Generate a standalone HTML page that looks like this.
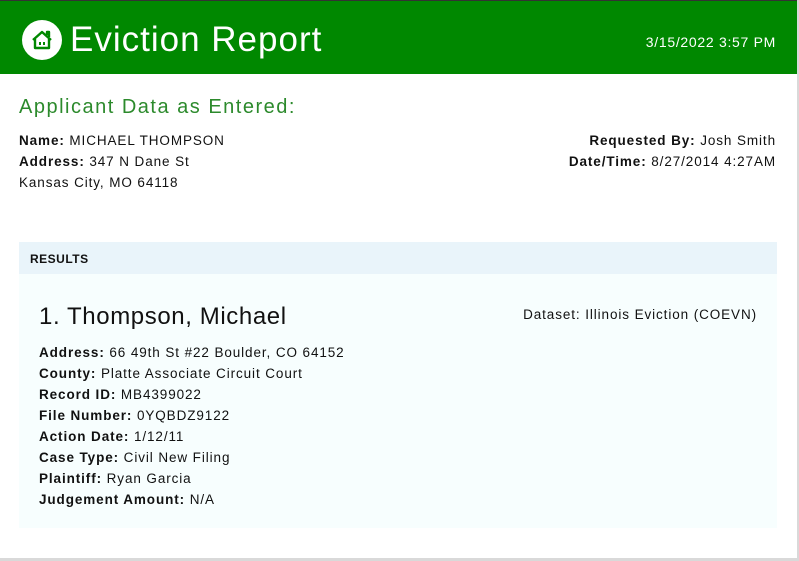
<!DOCTYPE html>
<html><head><meta charset="utf-8"><style>
*{margin:0;padding:0;box-sizing:border-box}
body{width:799px;height:561px;background:#d9d9d9;font-family:"Liberation Sans",sans-serif;color:#111;overflow:hidden;position:relative}
.page{position:absolute;left:0;top:0;width:797px;height:558px;background:#fff;border-top:1px solid #333}
.hdr{position:absolute;left:0;top:0;width:797px;height:73px;background:#008800;color:#fff}
.icon{position:absolute;left:22px;top:19px;width:40px;height:40px;border-radius:50%;background:#fff}
.title{position:absolute;left:70px;top:19px;font-size:35px;letter-spacing:1px}
.dt{position:absolute;right:21px;top:33px;font-size:14px;letter-spacing:0.7px}
h2{position:absolute;left:19px;top:95px;font-weight:normal;color:#2c8a2c;font-size:20px;letter-spacing:1.5px}
.l,.r,.f,.ds{font-size:13.5px;letter-spacing:0.9px}
.l{position:absolute;left:19px;top:129px;line-height:21px}
.r{position:absolute;right:21px;top:129px;line-height:21px;text-align:right}
.rh{position:absolute;left:19px;top:241px;width:758px;height:32px;background:#e9f4fa;font-weight:bold;font-size:12px;padding:10px 0 0 11px;letter-spacing:0.5px}
.card{position:absolute;left:19px;top:273px;width:758px;height:254px;background:#f7fefe}
.nm{position:absolute;left:20px;top:29px;font-size:24px;letter-spacing:0.6px}
.ds{position:absolute;right:20px;top:33px}
.f{position:absolute;left:20px;top:68px;line-height:21px}
</style></head><body><div class="page">
<div class="hdr"><div class="icon"><svg width="40" height="40" viewBox="0 0 40 40"><path d="M11 20 L20 12 L29 20 M13 19 V28 H27 V19 M25 15 V12 H27 V17" fill="none" stroke="#008800" stroke-width="2.4" stroke-linejoin="round"/><rect x="17" y="22" width="2" height="3" fill="#008800"/><rect x="21" y="22" width="2" height="3" fill="#008800"/></svg></div>
<div class="title">Eviction Report</div><div class="dt">3/15/2022 3:57 PM</div></div>
<h2>Applicant Data as Entered:</h2>
<div class="l"><b>Name:</b> MICHAEL THOMPSON<br><b>Address:</b> 347 N Dane St<br>Kansas City, MO 64118</div>
<div class="r"><b>Requested By:</b> Josh Smith<br><b>Date/Time:</b> 8/27/2014 4:27AM</div>
<div class="rh">RESULTS</div>
<div class="card"><div class="nm">1. Thompson, Michael</div><div class="ds">Dataset: Illinois Eviction (COEVN)</div>
<div class="f"><b>Address:</b> 66 49th St #22 Boulder, CO 64152<br><b>County:</b> Platte Associate Circuit Court<br><b>Record ID:</b> MB4399022<br><b>File Number:</b> 0YQBDZ9122<br><b>Action Date:</b> 1/12/11<br><b>Case Type:</b> Civil New Filing<br><b>Plaintiff:</b> Ryan Garcia<br><b>Judgement Amount:</b> N/A</div></div>
</div></body></html>
